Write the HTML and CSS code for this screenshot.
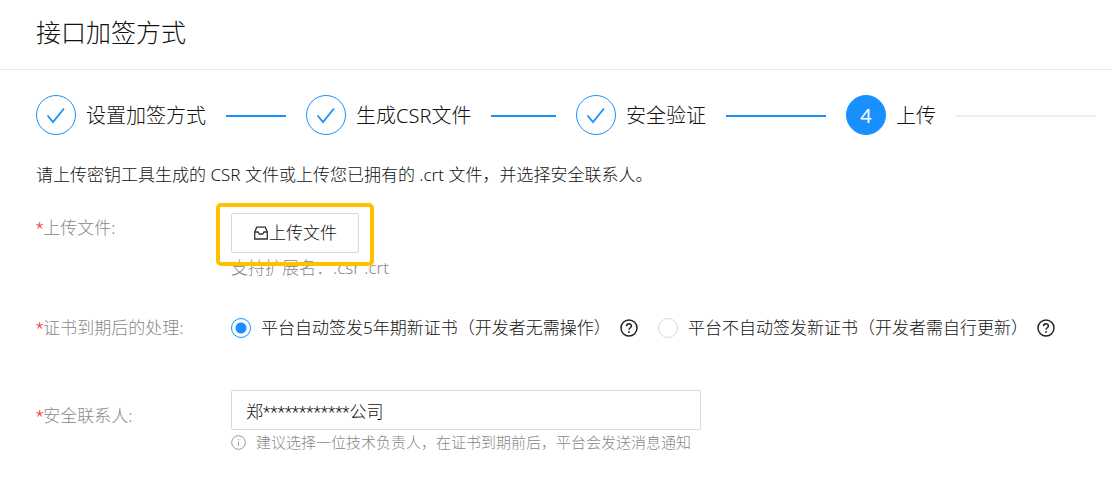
FILE: index.html
```html
<!DOCTYPE html>
<html lang="zh-CN">
  <head>
    <meta charset="UTF-8" />
    <meta name="viewport" content="width=device-width, initial-scale=1.0" />
    <title>接口加签方式</title>
    <link rel="stylesheet" href="styles.css">
  </head>
  <body>
    <header class="header">
      <h1 class="title">接口加签方式</h1>
    </header>
    <main class="content">
      <ol class="steps">
        <li class="step">
          <span class="step-icon">
            <svg width="20" height="20" viewBox="0 0 20 20">
              <path d="M1.5 10.5L7 17L18 3.5" fill="none" stroke="#1890ff" stroke-width="1.8"></path>
            </svg>
          </span>
          <span class="step-title">设置加签方式</span>
        </li>
        <li class="step">
          <span class="step-icon">
            <svg width="20" height="20" viewBox="0 0 20 20">
              <path d="M1.5 10.5L7 17L18 3.5" fill="none" stroke="#1890ff" stroke-width="1.8"></path>
            </svg>
          </span>
          <span class="step-title">生成CSR文件</span>
        </li>
        <li class="step">
          <span class="step-icon">
            <svg width="20" height="20" viewBox="0 0 20 20">
              <path d="M1.5 10.5L7 17L18 3.5" fill="none" stroke="#1890ff" stroke-width="1.8"></path>
            </svg>
          </span>
          <span class="step-title">安全验证</span>
        </li>
        <li class="step step-active">
          <span class="step-icon">4</span>
          <span class="step-title">上传</span>
        </li>
      </ol>

      <p class="intro">请上传密钥工具生成的 CSR 文件或上传您已拥有的 .crt 文件，并选择安全联系人。</p>

      <form class="form">
        <div class="row">
          <label class="label" for="upload"><span class="required">*</span>上传文件:</label>
          <div class="control">
            <div class="upload">
              <button id="upload" class="upload-button" type="button">
                <svg width="16" height="16" viewBox="0 0 16 16" fill="none" stroke="#333" stroke-width="1.3">
                  <path d="M1.7 7L3.7 2.2H12.3L14.3 7V14H1.7Z"></path>
                  <path d="M1.7 7H5L6.3 9H9.7L11 7H14.3"></path>
                </svg>
                上传文件
              </button>
            </div>
            <div class="extensions">支持扩展名：.csr .crt</div>
          </div>
        </div>

        <div class="row row-expire" role="radiogroup" aria-labelledby="expire-label">
          <span class="label" id="expire-label"><span class="required">*</span>证书到期后的处理:</span>
          <div class="control radios">
            <div class="option">
              <input class="radio" type="radio" name="expire" id="auto" checked />
              <label for="auto">平台自动签发5年期新证书（开发者无需操作）</label>
              <button class="help" type="button" aria-label="帮助">
                <svg width="18" height="18" viewBox="0 0 18 18" fill="none" stroke="#222" stroke-width="1.5">
                  <circle cx="9" cy="9" r="8"></circle>
                  <path d="M6.6 7.2C6.6 4 11.4 4 11.4 7.1C11.4 8.8 9 8.7 9 10.8"></path>
                  <circle cx="9" cy="13" r="0.9" fill="#222" stroke="none"></circle>
                </svg>
              </button>
            </div>
            <div class="option">
              <input class="radio" type="radio" name="expire" id="manual" />
              <label for="manual">平台不自动签发新证书（开发者需自行更新）</label>
              <button class="help" type="button" aria-label="帮助">
                <svg width="18" height="18" viewBox="0 0 18 18" fill="none" stroke="#222" stroke-width="1.5">
                  <circle cx="9" cy="9" r="8"></circle>
                  <path d="M6.6 7.2C6.6 4 11.4 4 11.4 7.1C11.4 8.8 9 8.7 9 10.8"></path>
                  <circle cx="9" cy="13" r="0.9" fill="#222" stroke="none"></circle>
                </svg>
              </button>
            </div>
          </div>
        </div>

        <div class="row row-contact">
          <label class="label" for="contact"><span class="required">*</span>安全联系人:</label>
          <div class="control">
            <input class="contact" id="contact" type="text" value="郑************公司" />
            <div class="tip">
              <svg width="15" height="15" viewBox="0 0 15 15" fill="none" stroke="#999">
                <circle cx="7.5" cy="7.5" r="6.8"></circle>
                <path d="M7.5 6.5V11M7.5 4V5.2"></path>
              </svg>
              建议选择一位技术负责人，在证书到期前后，平台会发送消息通知
            </div>
          </div>
        </div>
      </form>
    </main>
  </body>
</html>
```
FILE: styles.css
```css
* {
  box-sizing: border-box;
}

body {
  margin: 0;
  background: #fff;
  color: #111;
  font-family: "Noto Sans", "Noto Sans CJK SC", sans-serif;
  font-size: 17px;
  font-weight: 300;
  line-height: 26px;
}

button,
input {
  font: inherit;
  color: inherit;
}

.header {
  padding: 12px 36px 17px;
  border-bottom: 1px solid #e8e8e8;
}

.title {
  margin: 0;
  font-size: 25px;
  font-weight: 300;
  line-height: 40px;
}

.content {
  padding: 25px 16px 24px 36px;
}

.steps {
  display: grid;
  grid-template-columns: repeat(4, 1fr);
  gap: 20px;
  margin: 0;
  padding: 0;
  list-style: none;
}

.step {
  display: flex;
  align-items: center;
  font-size: 20px;
  white-space: nowrap;
}

/* connector line after each title */
.step::after {
  content: "";
  flex: 1;
  height: 2px;
  margin: 2px 0 0 20px;
  background: #1890ff;
}

.step-icon {
  display: flex;
  justify-content: center;
  align-items: center;
  width: 40px;
  height: 40px;
  margin-right: 10px;
  border: 1px solid #1890ff;
  border-radius: 50%;
}

.step-title {
  padding-top: 2px;
}

.step-active .step-icon {
  padding-top: 2px;
  background: #1890ff;
  color: #fff;
  font-weight: 400;
}

.step-active::after {
  background: #eee;
}

.intro {
  margin: 27px 0 26px;
}

.row {
  display: grid;
  grid-template-columns: 195px 1fr;
}

.label {
  padding-top: 1px;
  color: #888;
}

.required {
  color: #f5222d;
  font-family: Roboto, sans-serif;
}

.upload {
  position: relative;
  width: fit-content;
  margin-top: -1px;
}

/* highlight frame drawn over the button and the hint */
.upload::after {
  content: "";
  position: absolute;
  inset: -10px -15px -13px;
  border: 4px solid #ffc000;
  border-radius: 5px;
  pointer-events: none;
}

.upload-button {
  display: flex;
  justify-content: center;
  align-items: center;
  width: 128px;
  height: 40px;
  padding: 0;
  border: 1px solid #d9d9d9;
  border-radius: 2px;
  background: #fff;
}

.extensions {
  margin-top: 2px;
  color: #888;
}

.row-expire {
  margin-top: 33px;
}

.radios {
  display: grid;
  grid-template-columns: 407px auto;
  gap: 20px;
}

.option {
  display: flex;
  align-items: center;
  white-space: nowrap;
}

.radio {
  appearance: none;
  width: 20px;
  height: 20px;
  margin: 0 10px 0 0;
  border: 1px solid #d9d9d9;
  border-radius: 50%;
}

.radio:checked {
  border-color: #1890ff;
  background: radial-gradient(circle, #1890ff 5px, transparent 6px);
}

.help {
  display: flex;
  margin-left: 9px;
  padding: 0;
  border: 0;
  background: none;
}

.row-contact {
  margin-top: 49px;
}

.row-contact .label {
  padding-top: 13px;
}

.contact {
  display: block;
  width: 100%;
  max-width: 470px;
  height: 40px;
  padding: 0 14px;
  border: 1px solid #d9d9d9;
  border-radius: 2px;
  font-family: Roboto, "Noto Sans CJK SC", sans-serif;
}

.tip {
  display: flex;
  align-items: center;
  gap: 10px;
  color: #888;
  font-size: 15px;
  line-height: 24px;
}
```
